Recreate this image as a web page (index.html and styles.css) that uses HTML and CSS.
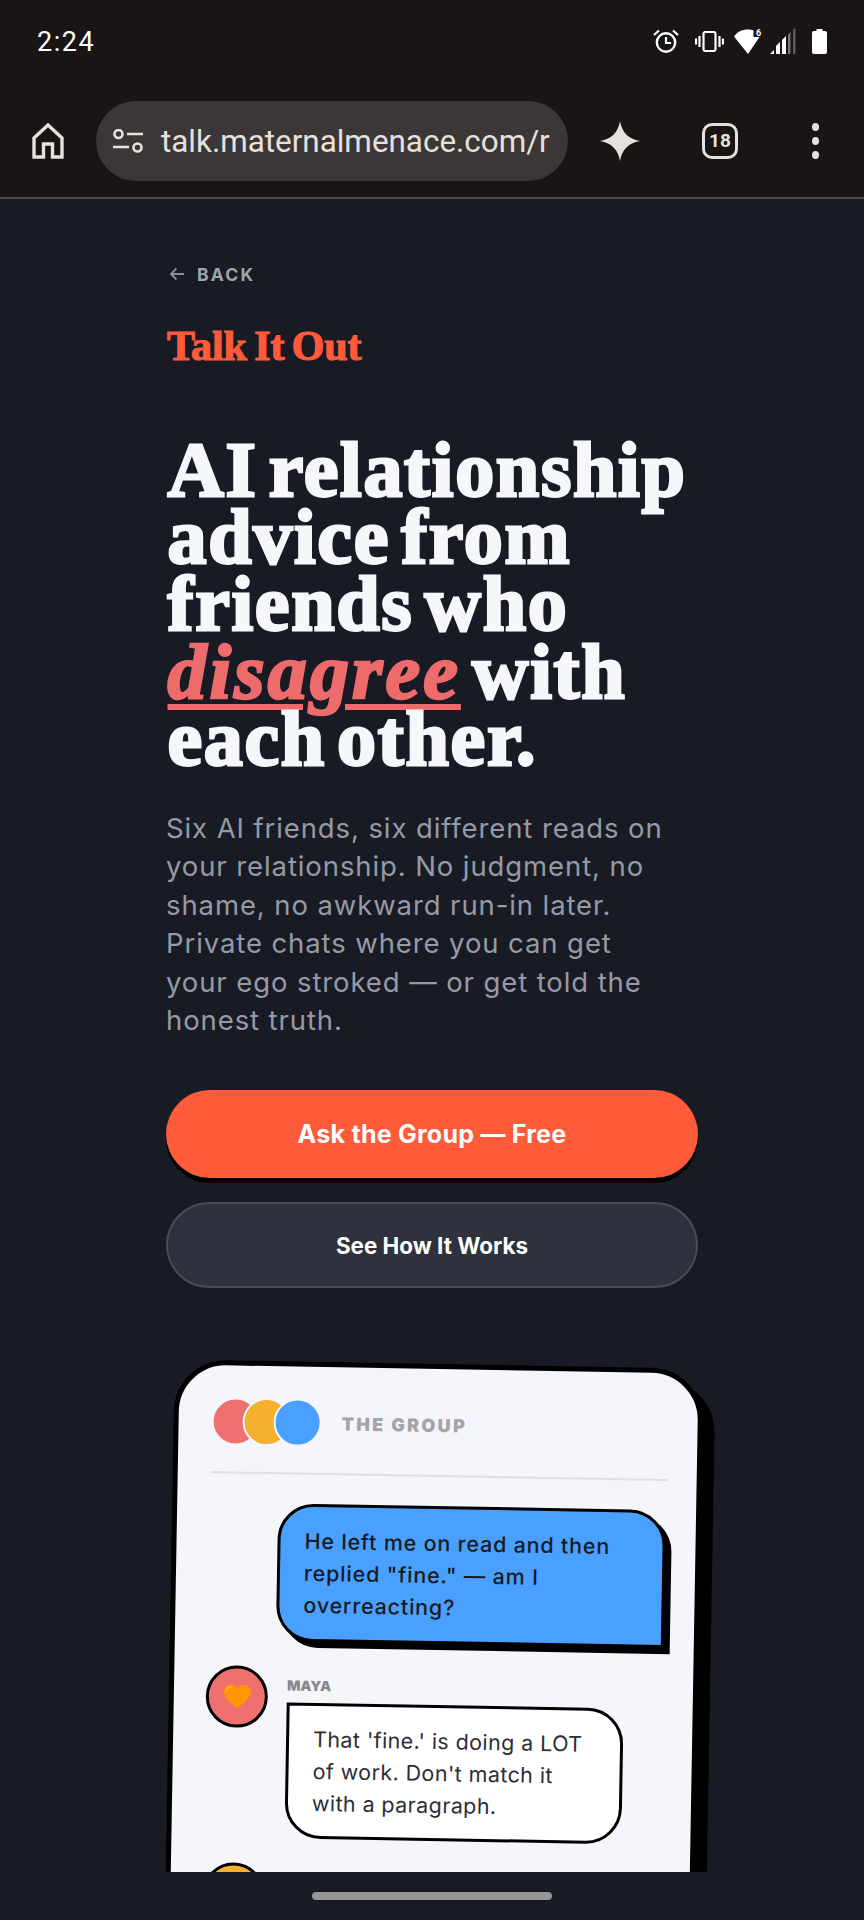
FILE: index.html
```html
<!DOCTYPE html>
<html lang="en">
<head>
<meta charset="utf-8">
<title>Talk It Out</title>
<link rel="stylesheet" href="styles.css">
</head>
<body>
<header class="chrome">
  <div class="status">
    <span class="time">2:24</span>
    <div class="status-icons">
      <svg class="ic-alarm" viewBox="0 0 26 24"><circle cx="13" cy="13.5" r="9.2" fill="none" stroke="#fff" stroke-width="2.4"/><path d="M13 8v6h5" fill="none" stroke="#fff" stroke-width="2.2"/><path d="M1 6l5-4.5M25 6l-5-4.5" fill="none" stroke="#fff" stroke-width="2.2"/></svg>
      <svg class="ic-vib" viewBox="0 0 29 21"><rect x="8.5" y="1" width="12" height="19" rx="2" fill="none" stroke="#fff" stroke-width="2.2"/><path d="M4.500 5v11M1 7.500v6M24.500 5v11M28 7.500v6" stroke="#fff" stroke-width="2.200" fill="none"/></svg>
      <svg class="ic-wifi" viewBox="0 0 29 25"><path d="M0 7.500C3 3 8 .5 14 .5c2 0 4 .3 5.500.9V8H25.500L14 25z" fill="#fff"/><text x="22" y="7" class="wifi-six">6</text></svg>
      <svg class="ic-signal" viewBox="0 0 26 26"><path d="M0 26l4-4v4z" fill="#fff"/><path d="M6 26v-8l4-4v12z" fill="#fff"/><path d="M12 26V12l4-4v18z" fill="#fff"/><path d="M18 26V6.500l2.500-2.500v22z" fill="#77716f"/><path d="M23 26V1.500L25.500 0v26z" fill="#5c5856"/></svg>
      <svg class="ic-batt" viewBox="0 0 15 25"><path d="M4.500 0h6v2h2.500a2 2 0 0 1 2 2v19a2 2 0 0 1-2 2H2a2 2 0 0 1-2-2V4a2 2 0 0 1 2-2h2.500z" fill="#fff"/></svg>
    </div>
  </div>
  <div class="toolbar">
    <svg class="ic-home" viewBox="0 0 32 36"><path d="M2 15L16 2l14 13v19h-9.500V21h-9v13H2z" fill="none" stroke="#e6e0de" stroke-width="3.400"/></svg>
    <div class="urlbar">
      <svg class="ic-tune" viewBox="0 0 30 24"><circle cx="5.500" cy="5" r="4" fill="none" stroke="#e6e0de" stroke-width="2.600"/><path d="M14 5h16M0 18h16" stroke="#e6e0de" stroke-width="2.600" fill="none"/><circle cx="24.500" cy="18.500" r="4" fill="none" stroke="#e6e0de" stroke-width="2.600"/></svg>
      <span class="url">talk.maternalmenace.com/r</span>
    </div>
    <svg class="ic-spark" viewBox="0 0 40 40"><path d="M20 0c2 11 8 18 20 20-12 2-18 9-20 20-2-11-8-18-20-20C12 18 18 11 20 0z" fill="#e6e0de"/></svg>
    <div class="tabs">18</div>
    <div class="menu"><i></i><i></i><i></i></div>
  </div>
</header>

<main class="page">
  <div class="column">
    <a class="back">
      <svg class="ic-back" viewBox="0 0 16 14"><path d="M15 7H2M7.500 1.500L2 7l5.500 5.500" fill="none" stroke="#8b8e9a" stroke-width="1.800"/></svg>
      <span>BACK</span>
    </a>
    <div class="brand">Talk It Out</div>
    <h1 class="title">AI relationship advice from friends who <em class="hot">disagree</em> with each other.</h1>
    <p class="lede">Six AI friends, six different reads on your relationship. No judgment, no shame, no awkward run-in later. Private chats where you can get your ego stroked — or get told the honest truth.</p>
    <a class="btn btn-primary">Ask the Group — Free</a>
    <a class="btn btn-ghost">See How It Works</a>

    <section class="phone">
      <div class="phone-head">
        <div class="stack">
          <span class="dot dot-red"></span>
          <span class="dot dot-amber"></span>
          <span class="dot dot-blue"></span>
        </div>
        <span class="group-name">THE GROUP</span>
      </div>
      <div class="bubble-user">He left me on read and then replied "fine." — am I overreacting?</div>
      <div class="msg">
        <div class="avatar avatar-red">
          <svg class="heart" viewBox="0 0 28 28" preserveAspectRatio="none"><path d="M14 27C8 21 1 15 1 8.500 1 4 4.500 1 8 1c2.500 0 4.800 1.300 6 4 1.200-2.700 3.500-4 6-4 3.500 0 7 3 7 7.500C27 15 20 21 14 27z" fill="#ff9800"/><path d="M3.500 9C3.500 5.500 6 3.500 8.500 3.500" fill="none" stroke="#ffb74d" stroke-width="1.500"/></svg>
        </div>
        <div class="msg-body">
          <div class="msg-name">MAYA</div>
          <div class="bubble-friend">That 'fine.' is doing a LOT of work. Don't match it with a paragraph.</div>
        </div>
      </div>
      <div class="msg">
        <div class="avatar avatar-amber"></div>
      </div>
    </section>
  </div>
</main>

<footer class="navbar"><span class="pill"></span></footer>
</body>
</html>
```

FILE: styles.css
```css
* { box-sizing: border-box; }
html, body { margin: 0; padding: 0; }
body {
  width: 864px;
  height: 1920px;
  overflow: hidden;
  background: #181b24;
  font-family: Inter, "Liberation Sans", sans-serif;
}

/* Browser chrome */
.chrome {
  height: 199px;
  background: #181514;
  border-bottom: 2px solid #4b4846;
  display: flex;
  flex-direction: column;
}
.status {
  height: 85px;
  padding: 28px 37px 0 37px;
  display: flex;
  justify-content: space-between;
  align-items: flex-start;
}
.time {
  font-family: Roboto, sans-serif;
  color: #fff;
  font-size: 27px;
  line-height: 28px;
  letter-spacing: 1.500px;
}
.status-icons {
  display: flex;
  align-items: center;
  height: 26px;
}
.ic-alarm { width: 26px; height: 24px; margin-right: 16px; }
.ic-vib { width: 29px; height: 21px; margin-right: 10px; }
.ic-wifi { width: 29px; height: 25px; margin-right: 7px; }
.ic-signal { width: 26px; height: 26px; margin-right: 16px; }
.ic-batt { width: 15px; height: 25px; }
.wifi-six { font: 700 9px Roboto, sans-serif; fill: #fff; }

.toolbar {
  display: flex;
  align-items: center;
  height: 80px;
  margin-top: 16px;
  padding-left: 32px;
}
.ic-home { width: 32px; height: 36px; margin-right: 32px; flex: none; }
.urlbar {
  width: 472px;
  height: 80px;
  border-radius: 40px;
  background: #3a3736;
  display: flex;
  align-items: center;
  padding-left: 17px;
  overflow: hidden;
  flex: none;
}
.ic-tune { width: 30px; height: 24px; margin-right: 18px; flex: none; }
.url {
  font-family: Roboto, sans-serif;
  color: #e6e0de;
  font-size: 31.400px;
  white-space: nowrap;
}
.ic-spark { width: 40px; height: 40px; margin-left: 32px; flex: none; }
.tabs {
  width: 36px;
  height: 36px;
  margin-left: 62px;
  border: 3.500px solid #e6e0de;
  border-radius: 10px;
  color: #e6e0de;
  font: 700 19px/29px Roboto, sans-serif;
  text-align: center;
  flex: none;
}
.menu {
  margin-left: 74px;
  display: flex;
  flex-direction: column;
  gap: 6px;
}
.menu i { width: 7px; height: 8px; border-radius: 50%; background: #e6e0de; display: block; }

/* Page */
.page {
  height: 1673px;
  overflow: hidden;
}
.column {
  width: 532px;
  margin-left: 166px;
  padding-top: 65px;
}
.back {
  display: flex;
  align-items: center;
  gap: 12px;
  height: 20px;
  color: #a0a3ae;
  font-size: 17.500px;
  font-weight: 700;
  letter-spacing: 2.200px;
}
.ic-back { width: 16px; height: 14px; margin-left: 3px; flex: none; }
.brand {
  margin-top: 40px;
  padding-left: 1px;
  color: #ff5a3a;
  font: 700 42px/44px "Liberation Serif", serif;
  -webkit-text-stroke: 1.200px #ff5a3a;
  letter-spacing: -0.1px;
  word-spacing: -3px;
}
.title {
  margin: 68px 0 0;
  padding-left: 1.500px;
  color: #f6f7fb;
  font: 700 78px/67.200px "Liberation Serif", serif;
  -webkit-text-stroke: 2.800px #f6f7fb;
  letter-spacing: 1.700px;
  word-spacing: -10px;
  width: 532px;
}
.hot {
  color: #ee6b6b;
  -webkit-text-stroke: 2.600px #ee6b6b;
  letter-spacing: 3.100px;
  text-decoration: underline;
  text-decoration-color: #ee6b6b;
  text-decoration-thickness: 6px;
  text-underline-offset: 6px;
}
.lede {
  margin: 37px 0 0;
  max-width: 505px;
  color: #979aa6;
  font-size: 27.500px;
  line-height: 38.400px;
  letter-spacing: 0.900px;
}
.btn {
  display: flex;
  align-items: center;
  justify-content: center;
  border-radius: 44px;
  color: #fff;
  font-weight: 700;
}
.btn-primary {
  margin-top: 51px;
  height: 88px;
  background: #ff5a3a;
  box-shadow: 0 5px 0 #000;
  font-size: 25px;
  letter-spacing: 0.250px;
}
.btn-ghost {
  margin-top: 24px;
  height: 86px;
  background: #2f323c;
  border: 2px solid #4a4d57;
  font-size: 22.400px;
}

/* Tilted phone */
.phone {
  margin-top: 76px;
  margin-right: 3px;
  height: 992px;
  background: #f4f6fb;
  border: 5px solid #000;
  border-radius: 52px;
  box-shadow: 12px 12px 0 #000;
  transform: rotate(1deg);
  padding: 32px 30px 32px 33px;
}
.phone-head {
  display: flex;
  align-items: center;
  padding-bottom: 26px;
  border-bottom: 2px solid #dfe0e6;
  margin-bottom: 29px;
}
.stack { display: flex; }
.dot {
  width: 48px;
  height: 48px;
  border-radius: 50%;
  border: 2px solid #f4f6fb;
  margin-right: -17px;
  display: block;
}
.dot-red { background: #f07070; }
.dot-amber { background: #f5b02e; }
.dot-blue { background: #4aa0ff; margin-right: 0; }
.group-name {
  margin-left: 20px;
  color: #a3a5a9;
  font-size: 18px;
  font-weight: 900;
  letter-spacing: 2.300px;
}
.bubble-user {
  margin-left: auto;
  width: 388px;
  padding: 18px 24px;
  background: #4aa0ff;
  border: 3px solid #000;
  border-radius: 36px 36px 0 36px;
  box-shadow: 6px 6px 0 #000;
  color: #181b24;
  font-size: 21.500px;
  font-weight: 500;
  letter-spacing: 0.800px;
  line-height: 32px;
}
.msg {
  display: flex;
  gap: 19px;
  margin-top: 25px;
  margin-left: -1px;
}
.avatar {
  width: 62px;
  height: 62px;
  border-radius: 50%;
  border: 3px solid #000;
  display: flex;
  align-items: center;
  justify-content: center;
  flex: none;
}
.avatar-red { background: #f07070; }
.avatar-amber { background: #f5b02e; }
.heart { width: 29px; height: 26px; }
.msg-name {
  color: #87888d;
  font-size: 14px;
  font-weight: 900;
  line-height: 18px;
  margin-top: 10px;
}
.bubble-friend {
  margin-top: 8px;
  width: 337px;
  padding: 17px 24px;
  background: #fff;
  border: 3px solid #000;
  border-radius: 0 36px 36px 36px;
  color: #2c2e36;
  font-size: 21.500px;
  letter-spacing: 0.400px;
  line-height: 32px;
}

/* Gesture bar */
.navbar {
  height: 48px;
  display: flex;
  justify-content: center;
  padding-top: 20px;
}
.pill {
  width: 240px;
  height: 8px;
  border-radius: 4px;
  background: #959598;
  display: block;
}
```
